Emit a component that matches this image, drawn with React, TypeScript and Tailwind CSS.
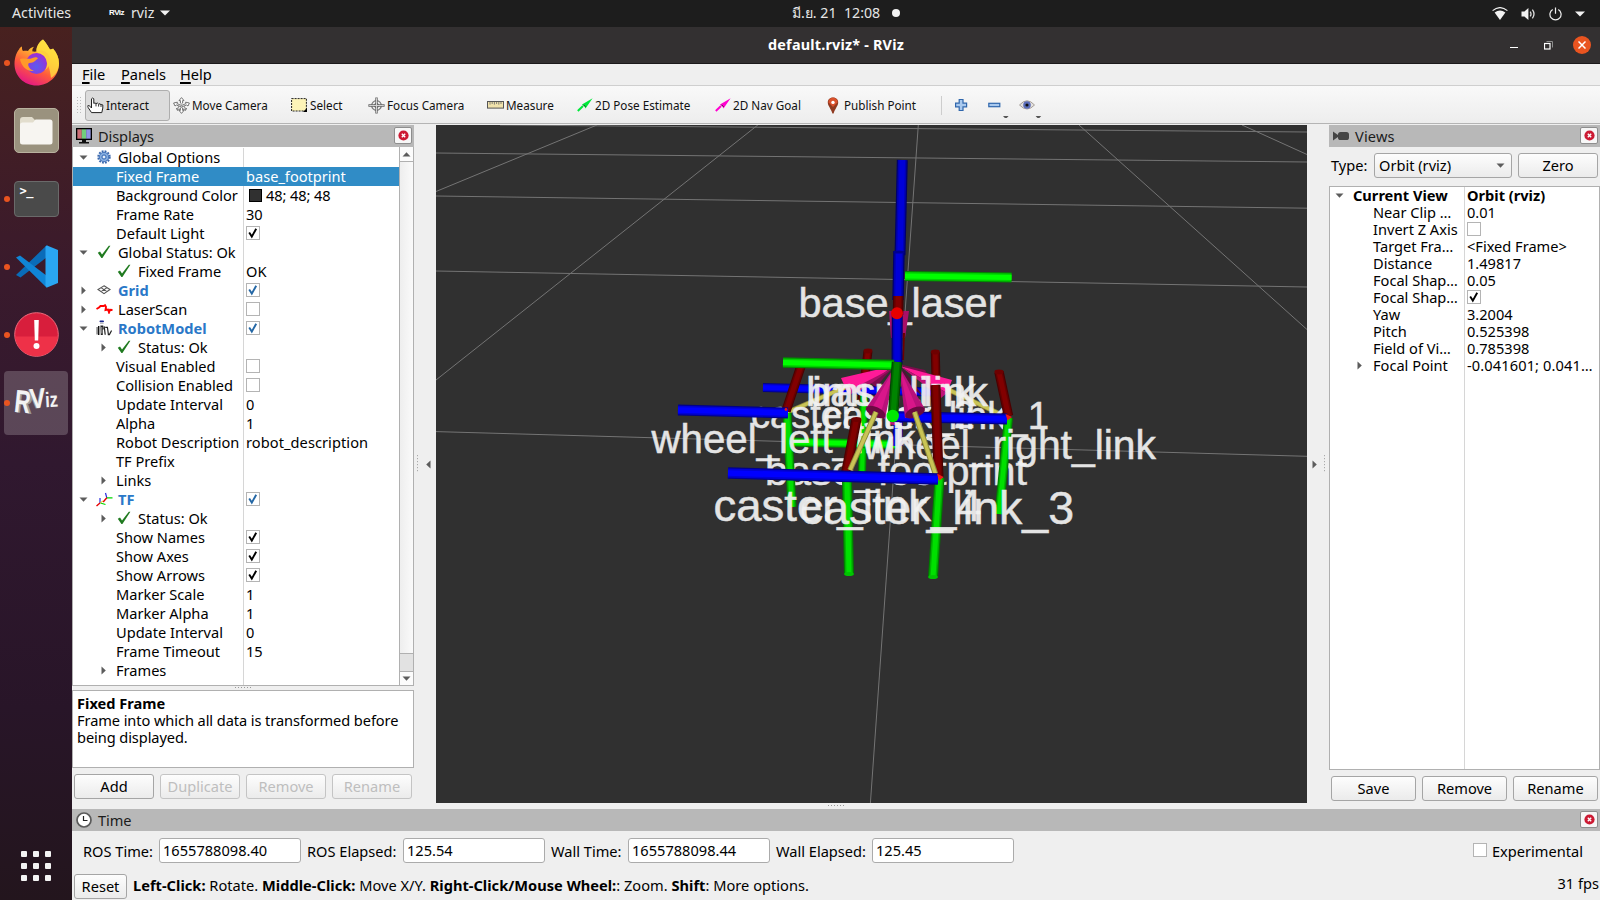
import React from "react";

type Pt = [number, number];

/* ---------- small widgets ---------- */

function Check({ on = true, blue = false }: { on?: boolean; blue?: boolean }) {
  return (
    <span className="-mt-px flex h-[14px] w-[14px] shrink-0 items-center justify-center border border-[#b4b4b4] bg-white">
      {on && (
        <svg width="12" height="12" viewBox="0 0 12 12">
          <path
            d="M2.2 5.6 L4.8 9.6 L9.2 1.8"
            fill="none"
            stroke={blue ? "#2467a5" : "#000"}
            strokeWidth="1.9"
          />
        </svg>
      )}
    </span>
  );
}

function Tri({ dir }: { dir: "down" | "right" | "left" | "up" }) {
  const d = {
    down: "M0.5 2.5 H8.5 L4.5 6.8 Z",
    up: "M0.5 6.5 H8.5 L4.5 2.2 Z",
    right: "M2.5 0.5 V8.5 L6.8 4.5 Z",
    left: "M6.5 0.5 V8.5 L2.2 4.5 Z",
  }[dir];
  return (
    <svg width="9" height="9" viewBox="0 0 9 9" className="shrink-0">
      <path d={d} fill="#5c5c5c" />
    </svg>
  );
}

function CloseBox() {
  return (
    <span className="mb-[2px] flex h-[17px] w-[18px] items-center justify-center rounded-[2px] border border-[#8e8e8e] bg-[#f7f7f7]">
      <svg width="11" height="11" viewBox="0 0 11 11">
        <circle cx="5.5" cy="5.5" r="5.1" fill="#cc1a33" />
        <path d="M3.8 3.8 L7.2 7.2 M7.2 3.8 L3.8 7.2" stroke="#fff" strokeWidth="1.4" />
      </svg>
    </span>
  );
}

function Button({ children, className = "", disabled = false }: { children: React.ReactNode; className?: string; disabled?: boolean }) {
  return (
    <div
      className={
        "flex h-[25px] items-center justify-center rounded-[3px] border bg-gradient-to-b from-[#fdfdfd] to-[#ebebeb] " +
        (disabled ? "border-[#c4c4c4] text-[#bebebe] " : "border-[#a5a5a5] text-black ") +
        className
      }
    >
      {children}
    </div>
  );
}

function DotsH() {
  return (
    <svg width="17" height="2" viewBox="0 0 17 2">
      {[0, 3, 6, 9, 12, 15].map((x) => (
        <rect key={x} x={x} y="0" width="1" height="1" fill="#999" />
      ))}
    </svg>
  );
}

function DotsV({ n }: { n: number }) {
  return (
    <svg width="2" height={n * 3} viewBox={`0 0 2 ${n * 3}`}>
      {Array.from({ length: n }, (_, i) => (
        <rect key={i} x="0" y={i * 3} width="1" height="1.2" fill="#aaa" />
      ))}
    </svg>
  );
}

/* ---------- tree icons ---------- */

const GreenCheck = () => (
  <svg width="14" height="14" viewBox="0 0 14 14">
    <path d="M0.8 7.8 L3 6.6 L5 9.6 L11.8 0.8 L13.4 0.8 L5.4 13 L4.4 13 Z" fill="#1f7a1f" />
  </svg>
);

const Gear = () => (
  <svg width="14" height="14" viewBox="0 0 14 14">
    <circle cx="7" cy="7" r="5.7" fill="none" stroke="#3a68ad" strokeWidth="2" strokeDasharray="1.8 1.18" />
    <circle cx="7" cy="7" r="4.7" fill="#86aee0" stroke="#3a6bb4" strokeWidth="0.9" />
    <circle cx="7" cy="7" r="2.1" fill="#b6d0f0" stroke="#3a6bb4" strokeWidth="1" />
    <circle cx="7" cy="7" r="0.9" fill="#fff" />
  </svg>
);

const GridIcon = () => (
  <svg width="14" height="10" viewBox="0 0 14 10">
    <path
      d="M7 0.8 L13 4.5 L7 8.6 L1 4.5 Z M4 2.6 L10 6.6 M10 2.6 L4 6.6"
      fill="none"
      stroke="#555"
      strokeWidth="1.1"
    />
  </svg>
);

const LaserIcon = () => (
  <svg width="17" height="10" viewBox="0 0 17 10">
    <path d="M0.5 5 L3 3.5 L4.5 2 L7.5 2 L9 1.2 L10 3 L9.5 6 L12 5.5 L13 8.4 L14 5.8 L16.5 6" fill="none" stroke="#f00" strokeWidth="1.9" />
  </svg>
);

const RobotIcon = () => (
  <svg width="16" height="16" viewBox="0 0 16 16">
    <rect x="3.5" y="0.4" width="4.5" height="1.8" rx="0.9" fill="#16248c" />
    <rect x="4" y="2.8" width="3.6" height="1" fill="#b0b0b0" />
    <path d="M0.4 7 H1.8 V14.5 H0.4 Z" fill="#777" />
    <path d="M2 6 H3.4 V15 H2 Z" fill="#111" />
    <path d="M4.4 5.6 H7.2 L7.8 9 L6.8 10 V15 H4.8 Z" fill="#222" />
    <path d="M5.8 7 V13.5" stroke="#ccc" strokeWidth="0.8" />
    <path d="M8.2 6.4 L9.2 14.8 M9.2 7.4 H11.4 L11.8 10 L12.4 14.6 L13.4 14.6 L15.6 10.6" fill="none" stroke="#222" strokeWidth="1.2" />
  </svg>
);

const TfIcon = () => (
  <svg width="17" height="15" viewBox="0 0 17 15">
    <path d="M9.5 1 L10.8 5.8 M4 6 V11" stroke="#2a2ae0" strokeWidth="1.2" />
    <path d="M10.8 5.8 H16.5 M4.5 11 L9.5 12.5" stroke="#00d800" strokeWidth="1.2" />
    <path d="M10.8 5.8 L7.2 10 M4 11 L0.5 14" stroke="#e80000" strokeWidth="1.4" />
    <path d="M4.2 10.8 L7 9" stroke="#e8c020" strokeWidth="1" />
  </svg>
);

/* ---------- displays tree ---------- */

type Row = {
  label: string;
  value?: React.ReactNode;
  arrow?: "down" | "right";
  level: number;
  icon?: React.ReactNode;
  bold?: boolean;
  selected?: boolean;
};

const rows: Row[] = [
  { label: "Global Options", arrow: "down", level: 0, icon: <Gear /> },
  { label: "Fixed Frame", level: 1, value: "base_footprint", selected: true },
  {
    label: "Background Color",
    level: 1,
    value: (
      <>
        <span className="mr-[4px] ml-[3px] h-[13px] w-[13px] border border-black bg-[#303030]" />
        <span className="tracking-[-0.1px]">48; 48; 48</span>
      </>
    ),
  },
  { label: "Frame Rate", level: 1, value: "30" },
  { label: "Default Light", level: 1, value: <Check /> },
  { label: "Global Status: Ok", arrow: "down", level: 0, icon: <GreenCheck /> },
  { label: "Fixed Frame", level: 1, icon: <GreenCheck />, value: "OK" },
  { label: "Grid", arrow: "right", level: 0, icon: <GridIcon />, bold: true, value: <Check blue /> },
  { label: "LaserScan", arrow: "right", level: 0, icon: <LaserIcon />, value: <Check on={false} /> },
  { label: "RobotModel", arrow: "down", level: 0, icon: <RobotIcon />, bold: true, value: <Check blue /> },
  { label: "Status: Ok", arrow: "right", level: 1, icon: <GreenCheck /> },
  { label: "Visual Enabled", level: 1, value: <Check on={false} /> },
  { label: "Collision Enabled", level: 1, value: <Check on={false} /> },
  { label: "Update Interval", level: 1, value: "0" },
  { label: "Alpha", level: 1, value: "1" },
  { label: "Robot Description", level: 1, value: <span className="tracking-[0.07px]">robot_description</span> },
  { label: "TF Prefix", level: 1 },
  { label: "Links", arrow: "right", level: 1 },
  { label: "TF", arrow: "down", level: 0, icon: <TfIcon />, bold: true, value: <Check blue /> },
  { label: "Status: Ok", arrow: "right", level: 1, icon: <GreenCheck /> },
  { label: "Show Names", level: 1, value: <Check /> },
  { label: "Show Axes", level: 1, value: <Check /> },
  { label: "Show Arrows", level: 1, value: <Check /> },
  { label: "Marker Scale", level: 1, value: "1" },
  { label: "Marker Alpha", level: 1, value: "1" },
  { label: "Update Interval", level: 1, value: "0" },
  { label: "Frame Timeout", level: 1, value: "15" },
  { label: "Frames", arrow: "right", level: 1 },
];

function TreeRow({ r }: { r: Row }) {
  return (
    <div className={"flex h-[19px] items-center " + (r.selected ? "bg-[#308cc6] text-white" : "")}>
      <div className={"flex h-full w-[171px] shrink-0 items-center border-r " + (r.selected ? "border-[#308cc6]" : "border-[#d6d6d6]")}>
        <span className={"flex w-[20px] shrink-0 justify-center " + (r.level === 1 ? "ml-[20px]" : "")}>
          {r.arrow && <Tri dir={r.arrow} />}
        </span>
        {r.icon && <span className="-mt-px flex w-[22px] shrink-0 justify-center">{r.icon}</span>}
        <span
          className={
            "whitespace-nowrap " +
            (r.icon ? "ml-[3px] " : "ml-[3px] ") +
            (r.label === "Background Color" ? "tracking-[-0.12px] " : "") +
            (r.bold ? "font-bold text-[#2a78c8]" : "")
          }
        >
          {r.label}
        </span>
      </div>
      <div className="ml-[2px] flex items-center whitespace-nowrap">{r.value}</div>
    </div>
  );
}

function DisplaysPanel() {
  return (
    <div className="flex w-[342px] shrink-0 flex-col">
      <div className="flex h-[22px] items-center justify-between bg-[#b8b8b8] pr-[2px] pl-[4px]">
        <div className="flex items-center gap-[6px]">
          <svg width="16" height="16" viewBox="0 0 16 16">
            <rect x="0.5" y="0.5" width="15" height="11" fill="#222" stroke="#000" />
            <rect x="1.4" y="1.4" width="4.4" height="9.2" fill="#cf6f78" />
            <rect x="5.8" y="1.4" width="4.4" height="9.2" fill="#72cf7c" />
            <rect x="10.2" y="1.4" width="4.4" height="9.2" fill="#9193e6" />
            <path d="M6 12 H10 V14 H13 V15.5 H3 V14 H6 Z" fill="#111" />
          </svg>
          <span className="tracking-[-0.1px] text-[#1c1c1c]">Displays</span>
        </div>
        <CloseBox />
      </div>
      <div className="flex h-[539px] border border-t-0 border-[#b0b0b0] bg-white">
        <div className="flex flex-1 flex-col pt-[1px]">
          {rows.map((r, i) => (
            <TreeRow key={i} r={r} />
          ))}
          <div className="w-[171px] flex-1 border-r border-[#d6d6d6]" />
        </div>
        <div className="flex w-[14px] flex-col border-l border-[#b0b0b0] bg-gradient-to-r from-[#eeeeee] to-[#fafafa]">
          <div className="flex h-[15px] items-center justify-center border-b border-[#b0b0b0] bg-[#fcfcfc]">
            <Tri dir="up" />
          </div>
          <div className="flex-1" />
          <div className="h-[19px] border-y border-[#b0b0b0] bg-[#e2e2e2]" />
          <div className="flex h-[13px] items-center justify-center bg-[#fcfcfc]">
            <Tri dir="down" />
          </div>
        </div>
      </div>
      <div className="flex h-[4px] items-center justify-center">
        <DotsH />
      </div>
      <div className="h-[78px] border border-[#b0b0b0] bg-white px-[4px] pt-[4px] leading-[17px]">
        <div className="font-bold">Fixed Frame</div>
        <div className="tracking-[-0.08px] whitespace-nowrap">Frame into which all data is transformed before</div>
        <div className="tracking-[-0.08px]">being displayed.</div>
      </div>
      <div className="mt-[6px] flex gap-[6px] pl-[2px]">
        <Button className="w-[80px]">Add</Button>
        <Button className="w-[80px]" disabled>Duplicate</Button>
        <Button className="w-[80px]" disabled>Remove</Button>
        <Button className="w-[80px]" disabled>Rename</Button>
      </div>
    </div>
  );
}

/* ---------- views panel ---------- */

const viewRows: { l: string; v: React.ReactNode; arrow?: boolean }[] = [
  { l: "Near Clip …", v: "0.01" },
  { l: "Invert Z Axis", v: <Check on={false} /> },
  { l: "Target Fra…", v: "<Fixed Frame>" },
  { l: "Distance", v: "1.49817" },
  { l: "Focal Shap…", v: "0.05" },
  { l: "Focal Shap…", v: <Check /> },
  { l: "Yaw", v: "3.2004" },
  { l: "Pitch", v: "0.525398" },
  { l: "Field of Vi…", v: "0.785398" },
  { l: "Focal Point", v: <span className="tracking-[0.12px]">-0.041601; 0.041…</span>, arrow: true },
];

function ViewsPanel() {
  return (
    <div className="flex w-[271px] shrink-0 flex-col">
      <div className="flex h-[22px] items-center justify-between bg-[#b8b8b8] pr-[2px] pl-[4px]">
        <div className="flex items-center gap-[6px]">
          <svg width="16" height="10" viewBox="0 0 16 10">
            <path d="M0 0.6 L5 4 V6 L0 9.4 Z" fill="#444" />
            <rect x="5" y="1" width="11" height="8" rx="2.6" fill="#444" />
          </svg>
          <span className="tracking-[0.15px] text-[#1c1c1c]">Views</span>
        </div>
        <CloseBox />
      </div>
      <div className="mt-[6px] flex h-[25px] items-center pl-[2px]">
        <span className="w-[43px]">Type:</span>
        <div className="flex h-[25px] w-[138px] items-center justify-between rounded-[3px] border border-[#a5a5a5] bg-gradient-to-b from-[#fdfdfd] to-[#ebebeb] pr-[6px] pl-[4px]">
          Orbit (rviz)
          <Tri dir="down" />
        </div>
        <Button className="ml-[6px] w-[80px]">Zero</Button>
      </div>
      <div className="mt-[8px] flex h-[584px] flex-col border border-[#b0b0b0] bg-white">
        <div className="flex h-[17px] items-center font-bold">
          <div className="flex h-full w-[135px] items-center border-r border-[#d6d6d6] whitespace-nowrap">
            <span className="flex w-[19px] justify-center"><Tri dir="down" /></span>
            <span className="ml-[4px]">Current View</span>
          </div>
          <span className="ml-[2px]">Orbit (rviz)</span>
        </div>
        {viewRows.map((r, i) => (
          <div key={i} className="flex h-[17px] items-center">
            <div className="flex h-full w-[135px] items-center border-r border-[#d6d6d6] whitespace-nowrap">
              <span className="ml-[20px] flex w-[19px] justify-center">{r.arrow && <Tri dir="right" />}</span>
              <span className="ml-[4px]">{r.l}</span>
            </div>
            <span className="ml-[2px] whitespace-nowrap">{r.v}</span>
          </div>
        ))}
        <div className="w-[135px] flex-1 border-r border-[#d6d6d6]" />
      </div>
      <div className="mt-[6px] flex gap-[6px] pl-[2px]">
        <Button className="w-[85px]">Save</Button>
        <Button className="w-[85px]">Remove</Button>
        <Button className="w-[85px]">Rename</Button>
      </div>
    </div>
  );
}

/* ---------- 3D scene ---------- */

const shades = {
  blue: ["#00008c", "#0000d6", "#0000ff"],
  deep: ["#00006a", "#0000b4", "#0000d8"],
  green: ["#008a00", "#00d000", "#00ff00"],
  leaf: ["#007a00", "#00b400", "#00e000"],
  red: ["#4a0000", "#680000", "#820000"],
  moss: ["#004600", "#006800", "#008400"],
} as const;

function Bar({ a, b, w, c }: { a: Pt; b: Pt; w: number; c: keyof typeof shades }) {
  const s = shades[c];
  return (
    <g>
      {[1, 0.78, 0.5].map((k, i) => (
        <line key={i} x1={a[0]} y1={a[1]} x2={b[0]} y2={b[1]} stroke={s[i]} strokeWidth={w * k} />
      ))}
    </g>
  );
}

function Cap({ x, y, rx, ry, fill }: { x: number; y: number; rx: number; ry: number; fill: string }) {
  return <ellipse cx={x} cy={y} rx={rx} ry={ry} fill={fill} />;
}

function Label({ x, y, size, len, children }: { x: number; y: number; size: number; len: number; children: string }) {
  return (
    <text
      x={x}
      y={y}
      fontSize={size}
      textLength={len}
      lengthAdjust="spacingAndGlyphs"
      fill="#f2f2f2"
      stroke="#f2f2f2"
      strokeWidth="0.5"
      opacity="0.93"
    >
      {children}
    </text>
  );
}

const gridLines: [number, number, number, number][] = [
  [918.3, 125, 870.4, 803],
  [500, 125, 1307, 132],
  [436, 153, 1307, 162],
  [436, 196, 1307, 208.2],
  [436, 271, 1307, 287],
  [436, 431.6, 1307, 456.3],
  [597, 125, 436, 191.5],
  [757.8, 125, 436, 380],
  [1079, 125, 1307, 329.5],
  [1242, 125, 1307, 154.5],
];

function Scene() {
  return (
    <svg width="871" height="678" viewBox="436 125 871 678" className="block shrink-0 bg-[#303030]" fontFamily="'Liberation Sans', Arial, sans-serif">
      <g stroke="#747474" strokeWidth="1">
        {gridLines.map((l, i) => (
          <line key={i} x1={l[0]} y1={l[1]} x2={l[2]} y2={l[3]} />
        ))}
      </g>

      <Label x={798.5} y={316.5} size={41} len={203}>base_laser</Label>

      {/* rear axes */}
      <Bar a={[868, 351]} b={[862, 400]} w={9} c="red" />
      <Cap x={868} y={351} rx={4.4} ry={2.4} fill="#6e0000" />
      <Bar a={[935.3, 352]} b={[936.5, 400]} w={9} c="red" />
      <Cap x={935.3} y={352} rx={4.4} ry={2.4} fill="#6e0000" />
      <Bar a={[864, 395]} b={[862, 474]} w={8} c="leaf" />
      <Bar a={[936, 393]} b={[936, 425]} w={9} c="leaf" />
      <Bar a={[763, 387.5]} b={[933, 392]} w={9} c="blue" />
      <Bar a={[790, 442]} b={[898, 444.5]} w={9} c="green" />
      <Bar a={[898, 415]} b={[897.5, 446]} w={10} c="blue" />

      {/* arrows toward the rear */}
      <polygon points="896,364 868,381 876,387" fill="#7d0c4e" />
      <polygon points="898,364 925,370 930,378" fill="#7d0c4e" />
      <polygon points="900,366 912,388 925,398" fill="#5a0838" />
      <polygon points="896,366 900,426 888,424" fill="#c01278" />
      <line x1="788" y1="412" x2="848" y2="386" stroke="#8d893c" strokeWidth="5" />
      <line x1="788" y1="412" x2="848" y2="386" stroke="#c9c455" strokeWidth="3.5" />
      <line x1="1000" y1="414" x2="947" y2="389" stroke="#8d893c" strokeWidth="5" />
      <line x1="1000" y1="414" x2="947" y2="389" stroke="#c9c455" strokeWidth="3.5" />
      <polygon points="893,366 841,378 848,394 858,392" fill="#ff1a98" />
      <polygon points="893,368 852,389 849,395 872,383" fill="#a80f68" />
      <polygon points="900,366 952,380 947,393" fill="#ff1a98" />
      <polygon points="900,366 947,393 941,398" fill="#c01278" />

      <Label x={751} y={427.5} size={38} len={224}>caster_link_2</Label>
      <Label x={823} y={429} size={38} len={226}>caster_link_1</Label>
      <Label x={765} y={484.5} size={40} len={262}>base_footprint</Label>
      <Label x={806} y={405.5} size={41} len={182}>base_link</Label>
      <Label x={812} y={405.5} size={40} len={164}>imu_link</Label>

      {/* side wheel axes */}
      <Bar a={[801, 366]} b={[786, 411]} w={9.5} c="red" />
      <Bar a={[787, 413]} b={[792, 507]} w={9} c="leaf" />
      <Bar a={[999, 372]} b={[1008.5, 416]} w={9.5} c="red" />
      <Cap x={999} y={372} rx={4.6} ry={2.4} fill="#6e0000" />
      <Bar a={[1008.5, 418]} b={[999, 514]} w={9} c="leaf" />
      <Bar a={[678, 410]} b={[788, 413]} w={11} c="blue" />
      <Bar a={[890, 416.5]} b={[1007, 419]} w={11} c="blue" />
      <polygon points="1005.500,414 1012,417 1007.500,420.500" fill="#f01818" />
      <circle cx="786" cy="409.500" r="1.4" fill="#f01818" />

      <Label x={651.5} y={452.7} size={40} len={264}>wheel_left_link</Label>
      <Label x={863} y={459} size={41} len={293}>wheel_right_link</Label>

      {/* upper column */}
      <polygon points="889,311 909,311 905,338 891,338" fill="#a80f68" />
      <line x1="904" y1="333" x2="903" y2="360" stroke="#6c0000" strokeWidth="2" />
      <Bar a={[902.3, 160]} b={[900, 255]} w={11} c="deep" />
      <Bar a={[905, 276]} b={[1011.5, 277.5]} w={10} c="green" />
      <Bar a={[899, 251]} b={[898, 300]} w={11.5} c="deep" />
      <Cap x={899} y={252} rx={5.6} ry={1.6} fill="#000090" />
      <Bar a={[898.3, 296]} b={[898, 315]} w={10.5} c="red" />
      <Bar a={[897.3, 313]} b={[897, 364]} w={11} c="deep" />
      <circle cx="897" cy="313.3" r="6" fill="#e60000" />

      {/* front arrows and axes */}
      <Bar a={[783, 362.5]} b={[894, 365]} w={10.5} c="green" />
      <polygon points="895.5,366 865.5,409 885,419" fill="#b8117a" />
      <polygon points="895.5,366 871,410 880,415" fill="#d9168a" />
      <ellipse cx="875.7" cy="412" rx="10.5" ry="5" transform="rotate(25 875.7 412)" fill="#6b0a42" />
      <polygon points="899,366 905,418 925,409" fill="#b8117a" />
      <polygon points="899,366 909,415 918,411" fill="#d9168a" />
      <ellipse cx="915" cy="412.5" rx="10.5" ry="5" transform="rotate(-22 915 412.5)" fill="#6b0a42" />
      <Bar a={[897, 362]} b={[893, 416]} w={10.5} c="moss" />
      <circle cx="892.7" cy="416" r="6.2" fill="#00e800" />

      <Bar a={[856.5, 419]} b={[846, 473]} w={10} c="red" />
      <Cap x={856.5} y={419.5} rx={4.9} ry={2.4} fill="#6e0000" />
      <Bar a={[935.5, 385]} b={[938.5, 477]} w={10} c="red" />
      <line x1="850" y1="470" x2="876" y2="412" stroke="#8d893c" strokeWidth="5.5" />
      <line x1="850" y1="470" x2="876" y2="412" stroke="#c9c455" strokeWidth="3.5" />
      <line x1="935.5" y1="474" x2="914.5" y2="412" stroke="#8d893c" strokeWidth="5.5" />
      <line x1="935.5" y1="474" x2="914.5" y2="412" stroke="#c9c455" strokeWidth="3.5" />
      <Bar a={[847, 480]} b={[849, 574.5]} w={10} c="leaf" />
      <Cap x={849} y={574} rx={4.8} ry={2} fill="#00c400" />
      <Bar a={[939.5, 478]} b={[933, 577.5]} w={10} c="leaf" />
      <Cap x={933} y={577} rx={4.8} ry={2} fill="#00c400" />
      <Bar a={[728, 473]} b={[938, 479]} w={11.5} c="blue" />
      <polygon points="937,473.500 943.500,477 939,481" fill="#f01818" />

      <Label x={713.5} y={521.2} size={45} len={268}>caster_link_4</Label>
      <Label x={800} y={523.5} size={46} len={274}>caster_link_3</Label>
    </svg>
  );
}

/* ---------- toolbar ---------- */

function Tool({ icon, label, className, gap = "gap-[2px]" }: { icon: React.ReactNode; label: string; className: string; gap?: string }) {
  return (
    <div className={"flex h-[31px] shrink-0 items-center " + gap + " " + className}>
      {icon}
      <span className="origin-left scale-x-[0.9] text-[13px] whitespace-nowrap">{label}</span>
    </div>
  );
}

const PoseArrow = ({ color }: { color: string }) => (
  <svg width="16" height="14" viewBox="0 0 16 14" className="shrink-0">
    <path d="M0.8 13 L6 8" stroke={color} strokeWidth="2" />
    <path d="M5 6.5 L15.6 0.2 L8.5 10.5 L7.5 8.5 Z" fill={color} />
    <path d="M6.5 6.8 L8.5 8.8" stroke="#222" strokeWidth="0.9" />
  </svg>
);

const CrossArrows = ({ round = false }: { round?: boolean }) => (
  <svg width="17" height="17" viewBox="0 0 17 17" className="shrink-0" fill="#fff" stroke="#666" strokeWidth="0.9">
    {round ? (
      <>
        <circle cx="8.5" cy="8.5" r="4.8" fill="none" stroke="#777" strokeWidth="1.2" />
        <circle cx="8.5" cy="8.5" r="2.2" fill="none" stroke="#777" strokeWidth="1" />
        <path d="M8.5 0.4 V16.6 M0.4 8.5 H16.6" stroke="#666" strokeWidth="2.4" />
        <path d="M8.5 1.2 V15.8 M1.2 8.5 H15.8" stroke="#ddd" strokeWidth="0.9" />
      </>
    ) : (
      <>
        <path d="M8.5 0.6 L11 3.6 H9.6 V6 L8.5 7 L7.4 6 V3.6 H6 Z M8.5 16.4 L11 13.4 H9.6 V11 L8.5 10 L7.4 11 V13.4 H6 Z" />
        <path d="M0.6 6 L4.4 5.2 L4 6.6 L8.5 8.5 L13 6.6 L12.6 5.2 L16.4 6 L15 9 L13.6 8 L8.5 10 L3.4 8 L2 9 Z" />
        <path d="M4.4 12.6 L5.6 9.4 M12.6 12.6 L11.4 9.4 M3.4 11 L4.4 13.4 L7 12 M13.6 11 L12.6 13.4 L10 12" fill="none" />
      </>
    )}
  </svg>
);

function Toolbar() {
  return (
    <div className="flex h-[38px] items-center border-b border-[#b4b4b4] bg-gradient-to-b from-[#f9f9f9] to-[#ededed] pt-px pl-[5px] text-[#111]">
      <svg width="4" height="17" viewBox="0 0 4 17" className="mr-[4px] shrink-0">
        {[0, 3, 6, 9, 12, 15].map((y) => (
          <g key={y} fill="#bbb">
            <rect x="0" y={y} width="1" height="1" />
            <rect x="3" y={y} width="1" height="1" />
          </g>
        ))}
      </svg>
      <Tool
        className="w-[85px] rounded-[3px] border border-[#aeaeae] bg-[#dcdcdc] pl-[1px]"
        label="Interact"
        icon={
          <svg width="17" height="17" viewBox="0 0 17 17" className="shrink-0">
            <path
              d="M4.5 11 L1.5 8 Q0.3 9 1.2 10.6 L4.5 15.6 H14.8 L15.8 11 V8 Q15 6.6 14 8 Q13.4 5.8 11.6 7.2 Q10.6 5.2 9 6.6 Q8 5.4 6.8 6.4 V1.8 Q5.6 0.2 4.5 1.8 Z"
              fill="#fff"
              stroke="#222"
              strokeWidth="1"
            />
            <path d="M9 7 V9.4 M11.6 7.4 V9.6 M14 8 V10" stroke="#222" strokeWidth="0.9" />
          </svg>
        }
      />
      <Tool className="ml-[3px] w-[118px]" label="Move Camera" icon={<CrossArrows />} />
      <Tool
        className="w-[77px]"
        label="Select"
        gap="gap-[3px]"
        icon={
          <svg width="16" height="14" viewBox="0 0 16 14" className="shrink-0">
            <rect x="0.6" y="0.6" width="14.8" height="12.4" fill="#fdf4b8" stroke="#222" strokeWidth="1" strokeDasharray="2 1" />
            <path d="M16 10 V14 H12 Z" fill="#000" />
          </svg>
        }
      />
      <Tool className="w-[119px]" label="Focus Camera" icon={<CrossArrows round />} />
      <Tool
        className="w-[90px]"
        label="Measure"
        icon={
          <svg width="17" height="8" viewBox="0 0 17 8" className="shrink-0">
            <rect x="0.5" y="0.5" width="16" height="6.6" fill="#f0e2ac" stroke="#555" />
            <path d="M3 1 V3.6 M5.2 1 V3 M7.4 1 V3.6 M9.6 1 V3 M11.8 1 V3.6 M14 1 V3" stroke="#666" strokeWidth="0.8" />
          </svg>
        }
      />
      <Tool className="w-[138px]" label="2D Pose Estimate" icon={<PoseArrow color="#00e83a" />} />
      <Tool className="w-[112px]" label="2D Nav Goal" icon={<PoseArrow color="#ff00d0" />} />
      <Tool
        className="w-[114px]"
        gap="gap-[5px]"
        label="Publish Point"
        icon={
          <svg width="12" height="17" viewBox="0 0 12 17" className="shrink-0">
            <path d="M6 0.5 C9.4 0.5 11.4 2.8 11.2 5.8 C11 9 8 12 6.6 16.4 H5.4 C4 12 1 9 0.8 5.8 C0.6 2.8 2.6 0.5 6 0.5 Z" fill="#8f3a20" />
            <path d="M6 0.8 C9 0.8 10.8 3 10.4 5.6 L6 10 L1.6 5.6 C1.2 3 3 0.8 6 0.8 Z" fill="#d9512c" />
            <circle cx="6" cy="5.4" r="1.7" fill="#fff" />
          </svg>
        }
      />
      <div className="h-[19px] w-px bg-[#cdcdcd]" />
      <svg width="90" height="26" viewBox="0 0 90 26" className="ml-[10px] shrink-0">
        <path d="M7.2 7.5 H11 V11.2 H14.6 V14.8 H11 V18.5 H7.2 V14.8 H3.6 V11.2 H7.2 Z" fill="#a9c9ee" stroke="#2f66ac" strokeWidth="1.2" />
        <rect x="36.800" y="11.3" width="11" height="3.4" fill="#a9c9ee" stroke="#2f66ac" strokeWidth="1.2" />
        <path d="M51 24 H56.6 L53.8 27 Z M83.600 24 H89.200 L86.400 27 Z" fill="#555" />
        <path d="M67.500 13 Q75 4.500 82.500 13 Q75 21 67.500 13 Z" fill="#e4e2e0" stroke="#a59d96" />
        <circle cx="75" cy="13" r="3.8" fill="#5a6cb8" />
        <circle cx="75" cy="13" r="1.6" fill="#111" />
      </svg>
    </div>
  );
}

/* ---------- desktop shell ---------- */

function TopBar() {
  return (
    <div className="grid h-[27px] grid-cols-[600px_1fr_600px] items-center bg-[#1d1d1d] text-[14.2px] text-[#e6e6e6]">
      <div className="flex items-center pl-[12px]">
        <span className="w-[97px]">Activities</span>
        <span className="w-[22px] font-['Liberation_Sans'] text-[8px] leading-none font-bold tracking-[-0.5px] text-white">RViz</span>
        <span>rviz</span>
        <svg width="10" height="6" viewBox="0 0 10 6" className="ml-[6px]">
          <path d="M0 0.5 H10 L5 5.5 Z" fill="#f2f2f2" />
        </svg>
      </div>
      <div className="flex items-center pl-[192px]">
        <span className="whitespace-nowrap">มี.ย. 21&nbsp; 12:08</span>
        <span className="ml-[12px] h-[8px] w-[8px] shrink-0 rounded-full bg-[#f2f2f2]" />
      </div>
      <div className="flex items-center justify-end gap-[13px] pr-[15px]">
        <svg width="16" height="14" viewBox="0 0 16 14">
          <path d="M0.6 3.6 Q8 -2.4 15.4 3.6" fill="none" stroke="#eee" strokeWidth="1.2" />
          <path d="M2.6 5.4 Q8 1.6 13.4 5.4 L8 13 Z" fill="#f2f2f2" />
        </svg>
        <svg width="15" height="14" viewBox="0 0 15 14">
          <path d="M0.5 4.6 H3.4 L7.4 1 V13 L3.4 9.4 H0.5 Z" fill="#f2f2f2" />
          <path d="M9.2 4.6 Q10.800 7 9.2 9.4 M11.4 2.6 Q14.600 7 11.4 11.4" fill="none" stroke="#ddd" strokeWidth="1.3" />
        </svg>
        <svg width="13" height="14" viewBox="0 0 14 14">
          <path d="M4 2.2 A6 6 0 1 0 10 2.2 M7 0 V6.6" fill="none" stroke="#eee" strokeWidth="1.3" />
        </svg>
        <svg width="10" height="6" viewBox="0 0 10 6">
          <path d="M0 0.5 H10 L5 5.5 Z" fill="#f2f2f2" />
        </svg>
      </div>
    </div>
  );
}

function DockItem({ children, dot = false, active = false }: { children: React.ReactNode; dot?: boolean; active?: boolean }) {
  return (
    <div className="flex h-[68px] items-center">
      <div className={"flex h-[64px] w-[64px] items-center rounded-[4px] " + (active ? "bg-white/20" : "")}>
        <span className={"h-[6px] w-[6px] shrink-0 rounded-full " + (dot ? "bg-[#e95420]" : "")} />
        <span className="-mt-px ml-[3.5px]">{children}</span>
      </div>
    </div>
  );
}

function Dock() {
  return (
    <div className="flex w-[72px] shrink-0 flex-col bg-[linear-gradient(180deg,#48211f_0%,#3a1a2c_28%,#30182f_50%,#281528_78%,#23151d_100%)] pt-[2px] pl-[4px]">
      <DockItem dot>
        <svg width="45" height="47" viewBox="0 0 45 47" className="-mt-px">
          <defs>
            <linearGradient id="fx" x1="0.8" y1="0" x2="0.3" y2="1">
              <stop offset="0" stopColor="#fff44f" />
              <stop offset="0.35" stopColor="#ffb52e" />
              <stop offset="0.65" stopColor="#ff5a3c" />
              <stop offset="1" stopColor="#e31587" />
            </linearGradient>
            <radialGradient id="fg" cx="0.5" cy="0.65" r="0.6">
              <stop offset="0" stopColor="#5a5cf0" />
              <stop offset="1" stopColor="#9a30d6" />
            </radialGradient>
          </defs>
          <path d="M29 0.5 C33 5 34.500 8 36 10.500 C38 10.500 39 9.500 39 9.500 C43 14 45 19 45 24.500 C45 37 35 46.500 22.500 46.500 C10 46.500 0.500 37 0.500 25 C0.500 18 3 13 5 10.500 C5.500 9 6.500 8 8 7.500 C7.800 9.500 8.200 11 9 12 C11 11.500 12.500 11.500 14 12 C15.500 9.500 18 8 20 7.800 C18.500 9.500 18 11 18.500 12.500 C21 12.800 22 12.500 22.500 12.500 C22 8 25 3 29 0.500 Z" fill="url(#fx)" />
          <path d="M29 0.5 C33 5 34.500 8 36 10.500 C38 10.500 39 9.500 39 9.500 C43 14 45 19 45 24.500 C45 30 42 36 37 39 C36 30 34 20 22.500 12.500 C22 8 25 3 29 0.500 Z" fill="#ffe040" fillOpacity="0.75" />
          <circle cx="22.500" cy="24.500" r="10.500" fill="url(#fg)" />
          <path d="M6 20 C11 18.500 14 21 18.500 19 C21 18 23 18 24 19.500 C22 21 20 24 15.500 24 C13 24 14 30 20 32 C12 33 7 26 6 20 Z" fill="#ff9a2a" />
          <path d="M22 12.500 C27 12 32 16 33 20 C34 24 33 29 31 31 C36 28 37 20 34 15 C30 10.500 25 11 22 12.500 Z" fill="#ffcf3d" />
        </svg>
      </DockItem>
      <DockItem>
        <svg width="45" height="45" viewBox="0 0 45 45">
          <rect x="0.500" y="0.500" width="44" height="44" rx="4.500" fill="#9a927e" stroke="#b9b29f" />
          <path d="M6 12 Q6 9 9 9 H18 L21 12 H22 V18 H6 Z" fill="#e2ddcd" />
          <path d="M6 17 Q6 14.500 8.500 14.500 H19 L21.500 11.500 H36 Q38.500 11.500 38.500 14 V34 Q38.500 36.500 36 36.500 H8.500 Q6 36.500 6 34 Z" fill="#f7f5f1" />
        </svg>
      </DockItem>
      <DockItem dot>
        <div className="flex h-[36px] w-[45px] rounded-[4px] border border-[#6a6a6a] bg-[#4a4a4a] px-[5px] pt-[2px] font-['DejaVu_Sans_Mono'] text-[12px] leading-[14px] font-bold tracking-[-0.5px] text-white">
          &gt;_
        </div>
      </DockItem>
      <DockItem dot>
        <svg width="45" height="43" viewBox="0 0 45 43">
          <path d="M2 30 L6.500 32.500 L37 9 L33 0 Z" fill="#0a6cb8" />
          <path d="M2 12.500 L6 10.500 L33 31 V43 Z" fill="#1085d6" />
          <path d="M33 0.500 L44 5 V38 L33 42.500 L31.500 41 V1.500 Z" fill="#2aa6f2" />
        </svg>
      </DockItem>
      <DockItem dot>
        <svg width="45" height="45" viewBox="0 0 45 45">
          <circle cx="22.500" cy="22.500" r="21.800" fill="#d81e3c" stroke="#f06a7c" strokeWidth="1" />
          <path d="M1 24.500 A21.600 21.600 0 0 0 44 24.500 Z" fill="#ee3148" />
          <path d="M20.200 8 H24.800 L24.200 28.500 H20.800 Z" fill="#fff" />
          <circle cx="22.500" cy="34" r="3" fill="#fff" />
        </svg>
      </DockItem>
      <DockItem dot active>
        <svg width="49" height="56" viewBox="-1 -12 49 56" fontFamily="'Liberation Sans', sans-serif" fontWeight="bold" className="-ml-px">
          <g fill="#9a9a9a">
            <text x="2" y="26" fontSize="32" textLength="17" lengthAdjust="spacingAndGlyphs" transform="rotate(6 8 16)">R</text>
            <text x="15" y="21.500" fontSize="28" textLength="16" lengthAdjust="spacingAndGlyphs" transform="rotate(-5 22 16)">V</text>
          </g>
          <g fill="#f3f3f3">
            <text x="0.500" y="25.500" fontSize="32" textLength="16" lengthAdjust="spacingAndGlyphs" transform="rotate(6 8 16)">R</text>
            <text x="16" y="21" fontSize="28" textLength="16" lengthAdjust="spacingAndGlyphs" transform="rotate(-5 22 16)">V</text>
            <text x="31" y="20" fontSize="21" textLength="13" lengthAdjust="spacingAndGlyphs" transform="rotate(-3 36 12)">iz</text>
          </g>
        </svg>
      </DockItem>
      <div className="flex-1" />
      <div className="mb-[19px] ml-[17px] grid w-[30px] grid-cols-3 gap-[6px]">
        {Array.from({ length: 9 }, (_, i) => (
          <span key={i} className="h-[6px] w-[6px] rounded-[1px] bg-[#f4f4f4]" />
        ))}
      </div>
    </div>
  );
}

function TitleBar() {
  return (
    <div className="flex h-[37px] items-center border-b border-[#1b1a1b] bg-[#333031] text-white">
      <span className="ml-[130px] flex-1 text-center text-[14.4px] font-bold tracking-[0.2px]">default.rviz* - RViz</span>
      <div className="flex w-[130px] items-center justify-end pr-[9px]">
        <span className="mt-[5px] h-px w-[8px] bg-white" />
        <svg width="9" height="9" viewBox="0 0 9 9" className="ml-[26px]">
          <path d="M2.500 0.500 H8.500 V6.500" fill="none" stroke="#8d8d8d" />
          <rect x="0.500" y="2.500" width="5.500" height="5.500" fill="none" stroke="#fff" strokeWidth="1.200" />
        </svg>
        <span className="ml-[20px] flex h-[18px] w-[18px] items-center justify-center rounded-full bg-[#e95420]">
          <svg width="8" height="8" viewBox="0 0 8 8">
            <path d="M0.500 0.500 L7.500 7.500 M7.500 0.500 L0.500 7.500" stroke="#fff" strokeWidth="1.500" />
          </svg>
        </span>
      </div>
    </div>
  );
}

function MenuItem({ children, className }: { children: string; className: string }) {
  return (
    <span className={className}>
      <span className="underline decoration-[1.5px] underline-offset-2">{children[0]}</span>
      {children.slice(1)}
    </span>
  );
}

function Field({ label, value, className }: { label: string; value: string; className: string }) {
  return (
    <div className="flex items-center">
      <span className={"pt-px whitespace-nowrap " + className}>{label}</span>
      <div className="flex h-[25px] w-[142px] items-center rounded-[3px] border border-[#ababab] bg-white pl-[3px]">{value}</div>
    </div>
  );
}

function TimePanel() {
  return (
    <div className="flex flex-1 flex-col">
      <div className="flex h-[22px] items-center justify-between bg-[#b8b8b8] pr-[2px] pl-[4px]">
        <div className="flex items-center gap-[6px]">
          <svg width="16" height="16" viewBox="0 0 16 16">
            <circle cx="8" cy="8" r="7" fill="#fff" stroke="#5a5a5a" strokeWidth="1.700" />
            <path d="M7.500 4 V8.500 H11.500" fill="none" stroke="#222" strokeWidth="1.200" />
          </svg>
          <span className="tracking-[-0.1px] text-[#1c1c1c]">Time</span>
        </div>
        <CloseBox />
      </div>
      <div className="mt-[7px] flex h-[25px] items-center">
        <Field label="ROS Time:" value="1655788098.40" className="w-[87px] pl-[11px]" />
        <Field label="ROS Elapsed:" value="125.54" className="w-[102px] pl-[6px]" />
        <Field label="Wall Time:" value="1655788098.44" className="w-[83px] pl-[6px]" />
        <Field label="Wall Elapsed:" value="125.45" className="w-[102px] pl-[6px]" />
        <div className="ml-auto flex w-[127px] items-center gap-[5px]">
          <Check on={false} />
          <span className="pt-px">Experimental</span>
        </div>
      </div>
      <div className="mt-[11px] flex h-[25px] items-center pr-[1px] pl-[2px]">
        <Button className="w-[53px]">Reset</Button>
        <span className="mb-[2px] ml-[6px] tracking-[0.02px] whitespace-nowrap">
          <b>Left-Click:</b> Rotate. <b>Middle-Click:</b> Move X/Y. <b>Right-Click/Mouse Wheel:</b>: Zoom. <b>Shift</b>: More options.
        </span>
        <span className="-mt-[7px] ml-auto whitespace-nowrap">31 fps</span>
      </div>
    </div>
  );
}

export default function App() {
  return (
    <div className="flex h-[900px] w-[1600px] flex-col overflow-hidden bg-[#efefef] font-['Noto_Sans','Open_Sans',sans-serif] text-[14.6px] leading-none text-black">
      <TopBar />
      <div className="flex min-h-0 flex-1">
        <Dock />
        <div className="flex w-[1528px] flex-col">
          <TitleBar />
          <div className="flex h-[22px] items-center border-b border-[#cfcfcf] pl-[10px]">
            <MenuItem className="w-[39px]">File</MenuItem>
            <MenuItem className="w-[59px]">Panels</MenuItem>
            <MenuItem className="w-[40px]">Help</MenuItem>
          </div>
          <Toolbar />
          <div className="mt-px flex h-[678px]">
            <DisplaysPanel />
            <div className="flex w-[22px] items-center pl-[3px]">
              <DotsV n={6} />
              <span className="ml-[5px]"><Tri dir="left" /></span>
            </div>
            <Scene />
            <div className="flex w-[22px] items-center pl-[3px]">
              <Tri dir="right" />
              <span className="ml-[5px]"><DotsV n={6} /></span>
            </div>
            <ViewsPanel />
          </div>
          <div className="flex h-[6px] items-center justify-center">
            <DotsH />
          </div>
          <TimePanel />
        </div>
      </div>
    </div>
  );
}
